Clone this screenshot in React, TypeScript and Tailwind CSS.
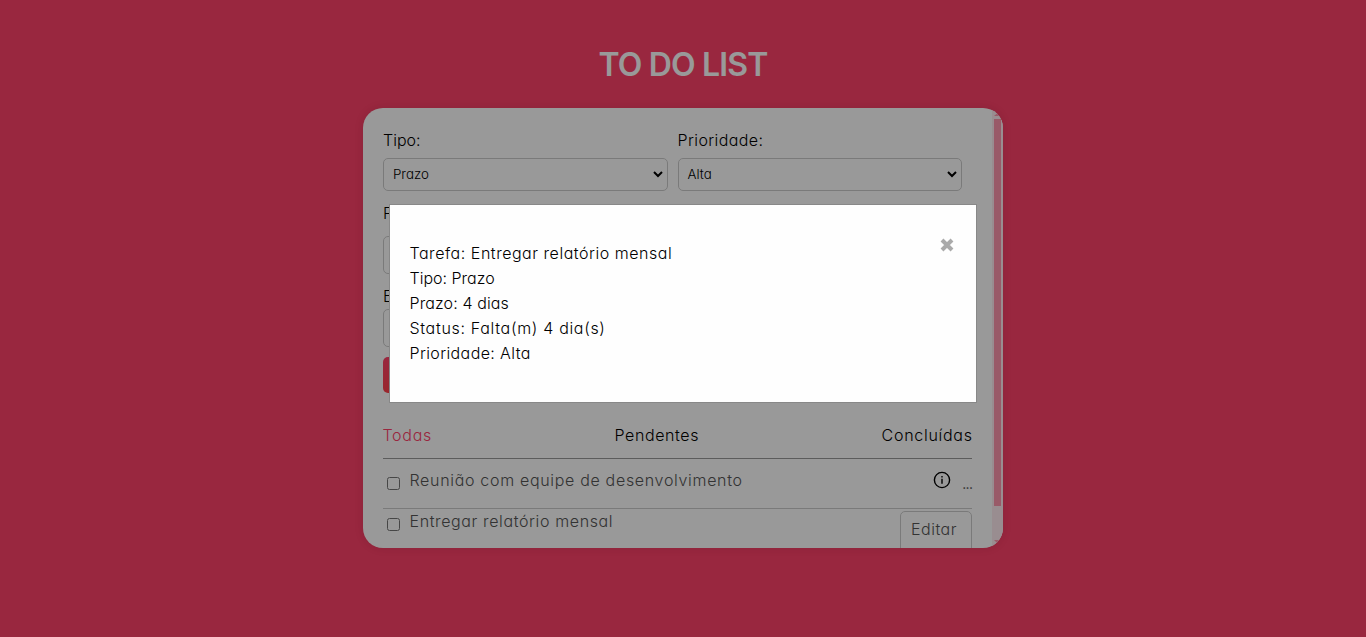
import React from "react";

const input = "h-[38px] w-full rounded-[5px] border border-[#ccc] bg-white";

function Select({ value }: { value: string }) {
  return (
    <div className="flex h-[33px] items-center justify-between rounded-[5px] border border-[#ccc] pr-[4px] pl-[9px] text-[13.33px]">
      <span>{value}</span>
      <svg width="10" height="7" viewBox="0 0 10 7" fill="none" stroke="#000" strokeWidth="2">
        <path d="M1 1l4 4 4-4" />
      </svg>
    </div>
  );
}

function Checkbox() {
  return <span className="mt-[9px] ml-1 size-[13px] shrink-0 rounded-[2.5px] border border-[#767676] bg-white" />;
}

export default function App() {
  return (
    <div className="h-[637px] overflow-hidden bg-[#ff4169] font-['Inter','Noto_Sans',sans-serif] text-[16px] leading-[25px] font-light text-black [font-feature-settings:'cv11']">
      <h1 className="pt-[41px] text-center text-[32px] leading-[48px] font-semibold tracking-[-0.85px] text-white">TO DO LIST</h1>
      <main className="mx-auto mt-[19px] flex h-[440px] w-[640px] overflow-hidden rounded-[20px] bg-white shadow-[0_0_10px_rgba(0,0,0,0.1)]">
        <div className="w-[629px] pt-5 pr-5 pl-5">
          <div className="flex w-[579px] gap-[10px]">
            <div className="flex-1">
              <label className="mb-[5px] block">Tipo:</label>
              <Select value="Prazo" />
            </div>
            <div className="flex-1">
              <label className="mb-[5px] block tracking-[0.4px]">Prioridade:</label>
              <Select value="Alta" />
            </div>
          </div>
          <label className="mt-[10px] mb-[10px] block">P</label>
          <div className={input} />
          <label className="mt-[10px] block">E</label>
          <div className={input} />
          <div className="mt-[10px] h-9 rounded-[5px] bg-linear-to-b from-[#ff4169] to-[#ff414b]" />
          <nav className="mt-[30px] flex justify-between">
            <span className="-ml-[0.5px] tracking-[0.7px] text-[#ff4169]">Todas</span>
            <span className="tracking-[0.6px]">Pendentes</span>
            <span className="-mr-[0.7px] tracking-[0.72px]">Concluídas</span>
          </nav>
          <hr className="mt-[10px] border-[#999]" />
          <div className="flex h-[50px] border-b border-[#ccc] pt-[9px] text-[#555]">
            <Checkbox />
            <span className="ml-[9.5px] flex-1 tracking-[0.68px]">Reunião com equipe de desenvolvimento</span>
            <svg className="mt-[3px]" width="18" height="18" viewBox="0 0 18 18" fill="none" stroke="#000" strokeWidth="1.4">
              <circle cx="9" cy="9" r="7.6" />
              <path d="M9 7.8v5M9 5v1.6" />
            </svg>
            <span className="mt-[3px] -mr-[0.5px] ml-[11px] text-[14px] font-normal tracking-[-0.6px]">...</span>
          </div>
          <div className="flex text-[#555]">
            <Checkbox />
            <span className="ml-[9.5px] flex-1 tracking-[0.62px]">Entregar relatório mensal</span>
            <div className="mt-[2px] h-[50px] w-[72px] rounded-[5px] border border-[#ccc] pt-[5px] pl-[10px] tracking-[0.5px]">Editar</div>
          </div>
        </div>
        <div className="flex w-[11px] flex-col bg-[#ffecf1] pr-[2px] pl-[2px]">
          <svg className="h-[11px] w-[7px]" viewBox="0 0 7 11" fill="#ff96ae">
            <path d="M3.5 5L7 8H0z" />
          </svg>
          <div className="h-[387px] bg-[#ff96ae]" />
          <svg className="mt-[33px] h-[5px] w-[7px]" viewBox="0 0 7 5" fill="#ff96ae">
            <path d="M0 1h7L3.5 4.5z" />
          </svg>
        </div>
      </main>
      <div className="fixed inset-0 bg-black/40">
        <section className="mx-auto mt-[204px] flex h-[199px] w-[588px] justify-between border border-[#888] bg-[#fefefe] pt-9 pr-[21px] pl-[19.5px]">
          <div>
            <p className="tracking-[0.53px]">Tarefa: Entregar relatório mensal</p>
            <p>Tipo: Prazo</p>
            <p className="tracking-[0.12px]">Prazo: 4 dias</p>
            <p className="tracking-[0.68px]">Status: Falta(m) 4 dia(s)</p>
            <p className="tracking-[0.38px]">Prioridade: Alta</p>
          </div>
          <svg className="-mt-[3px]" width="16" height="16" viewBox="0 0 16 16" stroke="#aaa" strokeWidth="4">
            <path d="M3 2l10 10M13 2L3 12" />
          </svg>
        </section>
      </div>
    </div>
  );
}
